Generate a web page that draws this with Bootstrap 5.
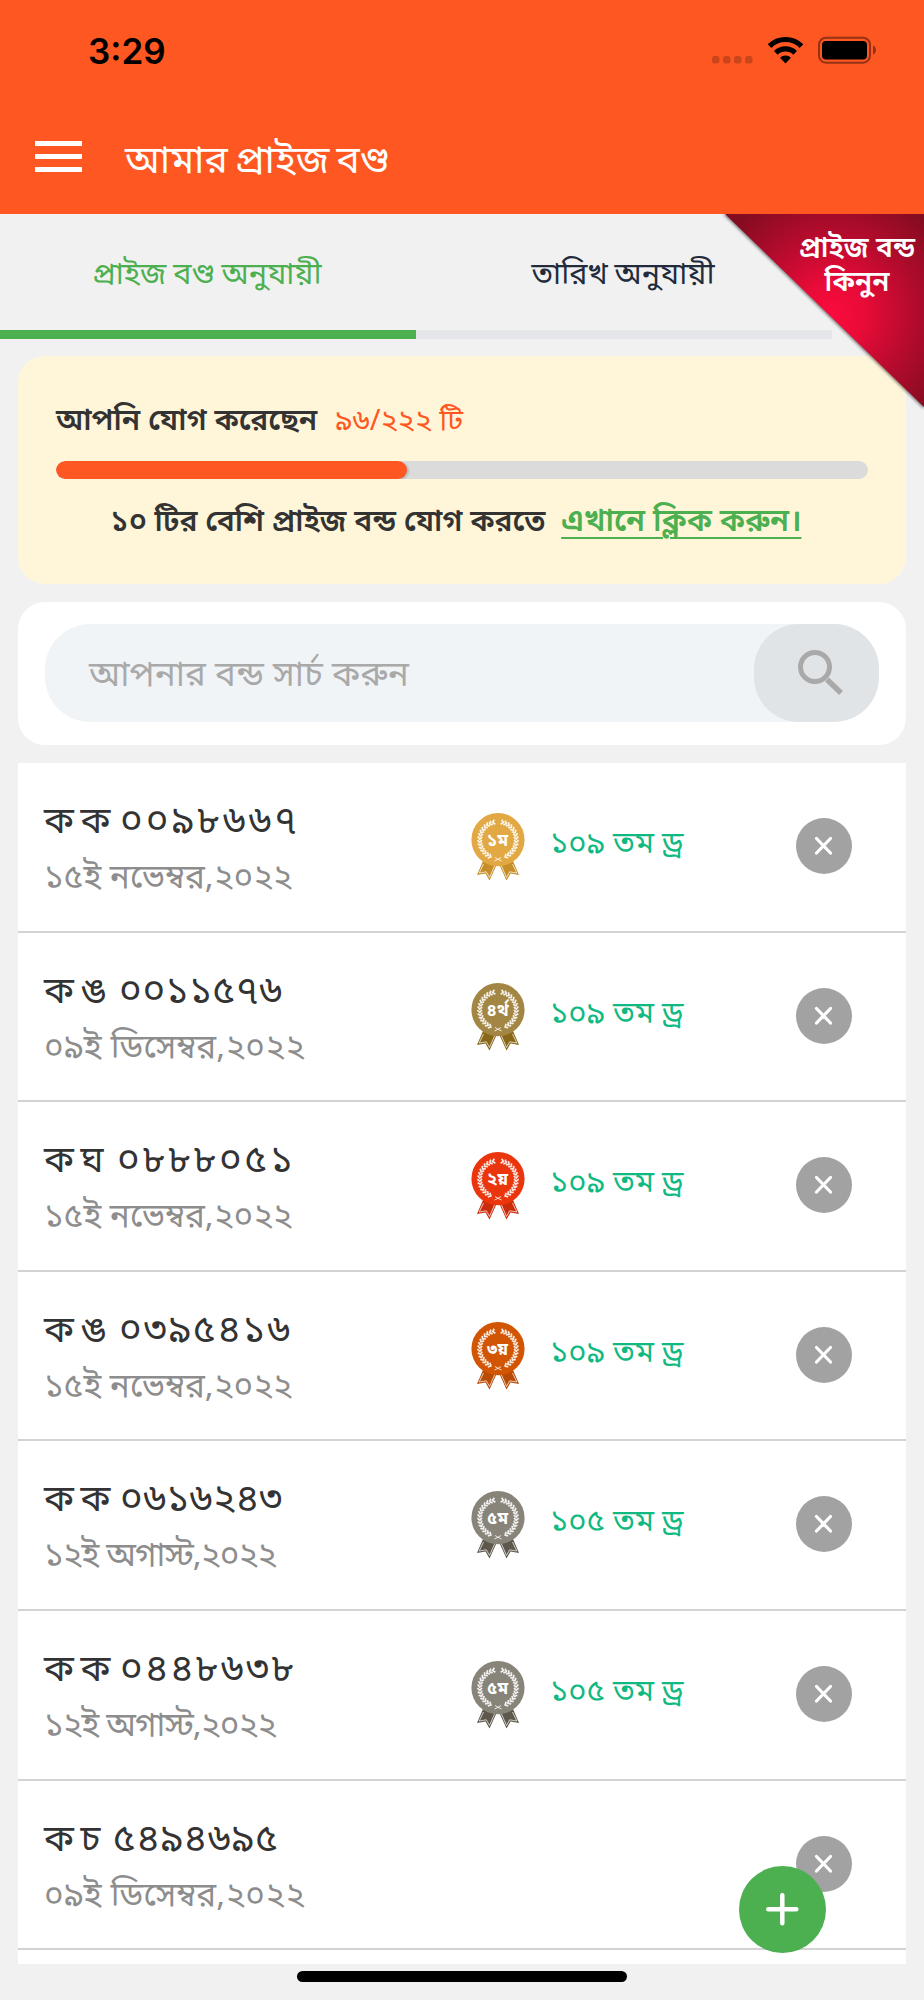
<!DOCTYPE html>
<html lang="bn">
<head>
<meta charset="utf-8">
<meta name="viewport" content="width=device-width, initial-scale=1">
<title>আমার প্রাইজ বণ্ড</title>
<link href="https://cdn.jsdelivr.net/npm/bootstrap@5.3.0/dist/css/bootstrap.min.css" rel="stylesheet">
<style>
body{background:#f1f1f1;font-family:"Noto Sans Bengali","Noto Sans",sans-serif;color:#333;width:924px;height:2000px;overflow:hidden}
.app-head{background:#ff5722;height:214px}
.status{height:100px;padding:2px 44px 0 88px}
.clock{font:600 35px/1 Inter,sans-serif;color:#000}
.title-bar{height:114px;padding-left:35px}
.app-title{font-size:39px;line-height:50px;color:#fff;margin-left:43px;padding-top:11px;word-spacing:-3px}
.tab-row{height:125px;width:832px}
.tab-item{width:416px;height:125px;padding:8px 2px 0 0;border:0;border-bottom:9px solid #e5e6ea;background:none;font-size:30.500px;line-height:50px;color:#222b3b;word-spacing:-1px}
.tab-item.on{color:#4caf50;border-color:#4caf50}
.corner{position:absolute;right:0;top:0;width:204px;height:200px}
.corner-text{position:absolute;right:8px;top:19px;width:118px;font-size:28px;line-height:34px;font-weight:600;color:#fff;white-space:nowrap}
.panel{margin:0 18px;border-radius:27px}
.quota{background:#fff6da;height:228px;margin-top:17px;padding:41px 38px 0}
.line-txt{font-size:30px;line-height:50px;height:50px;white-space:nowrap}
.bar{height:18px;border-radius:9px;background:#dbdbdb;margin-top:14px;overflow:hidden}
.bar i{display:block;height:18px;border-radius:9px;background:#ff5722;box-shadow:2px 1px 2px rgba(0,0,0,.15)}
.orange{color:#ff5722;font-size:29px;margin-left:18px}
.more{margin-top:19px;padding-right:12px}
.here{color:#4caf50;font-size:31px;text-underline-offset:6px;text-decoration-thickness:2px}
.search-card{height:143px;margin-top:18px;padding:22px 27px}
.pill{background:#f0f4f7;height:98px;border-radius:45px;padding-left:44px}
.pill span{font-size:35px;line-height:50px;color:#a9a9a9;padding-top:7px}
.go{width:125px;height:98px;border-radius:45px;background:#e0e4e6;padding-left:8px}
.bonds{margin:18px 18px 0;height:1201px;overflow:hidden}
.bond{height:169.6px;border-bottom:2px solid #d3d3d3;padding:0 54px 0 26px;background:#fff}
.bond-no{font-size:38.500px;line-height:56px;height:56px;white-space:nowrap;word-spacing:-3px}
.bond-no span:first-child{font-size:37px}
.bond-date{font-size:33.300px;line-height:56px;height:56px;color:#8d8d8d;white-space:nowrap}
.info{width:427px;padding-top:33px}
.medal{width:54px;height:68px;margin-top:50px}
.draw{font-size:31px;line-height:50px;color:#10b981;margin:58px 0 0 25px;white-space:nowrap}
.del{width:56px;height:56px;background:#a2a2a2;margin-top:55px}
.fab{position:absolute;left:739px;top:1866px;width:87px;height:87px;background:#4caf50}
.home-bar{width:330px;height:11px;border-radius:6px;background:#000;margin:7px auto 0}
</style>
</head>
<body>
<header class="app-head">
  <div class="status d-flex align-items-center justify-content-between">
    <span class="clock">3:29</span>
    <svg width="168" height="30" viewBox="0 0 168 30">
      <g fill="#000" opacity=".2"><rect x="0" y="20" width="7.500" height="7.500" rx="2.500"/><rect x="11" y="20" width="7.500" height="7.500" rx="2.500"/><rect x="22" y="20" width="7.500" height="7.500" rx="2.500"/><rect x="33" y="20" width="7.500" height="7.500" rx="2.500"/></g>
      <g fill="none" stroke="#000" stroke-width="5.200"><path d="M57.500 10.200A22.500 22.500 0 0 1 89.500 10.200"/><path d="M63.800 16.800A14 14 0 0 1 83.200 16.800"/></g>
      <path d="M73.500 27.500L68 21.800A8 8 0 0 1 79 21.800Z"/>
      <rect x="107" y="1.700" width="51" height="25" rx="7" fill="none" stroke="#000" stroke-opacity=".42" stroke-width="2"/>
      <rect x="110" y="5" width="45" height="18.500" rx="4"/><path d="M161 9.500c4 1.500 4 7.500 0 9z" opacity=".42"/>
    </svg>
  </div>
  <div class="title-bar d-flex align-items-center">
    <svg width="47" height="32" viewBox="0 0 47 32" fill="#fff"><path d="M0 0h47v5H0zM0 13h47v5H0zM0 26h47v5H0z"/></svg>
    <div class="app-title">আমার প্রাইজ বণ্ড</div>
  </div>
</header>
<div class="position-relative">
  <nav class="tab-row d-flex">
    <button class="tab-item on">প্রাইজ বণ্ড অনুযায়ী</button>
    <button class="tab-item">তারিখ অনুযায়ী</button>
  </nav>
  <div class="corner">
    <svg width="204" height="200" viewBox="0 0 204 200">
      <defs><radialGradient id="rb" gradientUnits="userSpaceOnUse" cx="112" cy="100" r="132"><stop offset="0" stop-color="#f90b3d"/><stop offset=".25" stop-color="#e80b38"/><stop offset=".6" stop-color="#b60b2d"/><stop offset="1" stop-color="#830c20"/></radialGradient>
      <filter id="sh"><feGaussianBlur stdDeviation="1.500"/></filter></defs>
      <path d="M3 0H204V195Z" fill="#000" opacity=".5" filter="url(#sh)"/><path d="M5 0H204V193Z" fill="url(#rb)"/>
    </svg>
    <div class="corner-text text-center">প্রাইজ বন্ড<br>কিনুন</div>
  </div>
</div>
<main>
  <section class="panel quota">
    <div class="line-txt"><b class="fw-semibold">আপনি যোগ করেছেন</b><span class="orange">৯৬/২২২ টি</span></div>
    <div class="bar"><i style="width:43.24%"></i></div>
    <div class="line-txt fw-semibold text-center more">১০ টির বেশি প্রাইজ বন্ড যোগ করতে<a class="here ms-3" href="#">এখানে ক্লিক করুন।</a></div>
  </section>
  <section class="panel search-card bg-white">
    <div class="pill d-flex align-items-center justify-content-between">
      <span>আপনার বন্ড সার্চ করুন</span>
      <div class="go d-flex align-items-center justify-content-center"><svg width="50" height="50" viewBox="0 0 50 50" fill="none" stroke="#a9a9a9"><circle cx="19" cy="19" r="14.500" stroke-width="5"/><path d="M31 31.500L45 45" stroke-width="5.500"/></svg></div>
    </div>
  </section>
  <section class="bonds bg-white" id="bonds"></section>
</main>
<button class="fab rounded-circle border-0 p-0 d-flex align-items-center justify-content-center"><svg width="34" height="34" viewBox="0 0 34 34" stroke="#fff" stroke-width="4.500" stroke-linecap="round"><path d="M16.300 2.200v28M2.300 16.200h28"/></svg></button>
<div class="home-bar"></div>
<script>
// series letters, series width, number, number tracking, date, date tracking, rank, draw, medal colour, ribbon colour
const rows=[
 ['ক ক',76,'০০৯৮৬৬৭',2.9,'১৫ই নভেম্বর,২০২২',0,'১ম','১০৯ তম ড্র','#e2a843','#c68e28'],
 ['ক ঙ',75,'০০১১৫৭৬',.6,'০৯ই ডিসেম্বর,২০২২',.2,'৪র্থ','১০৯ তম ড্র','#a38643','#886818'],
 ['ক ঘ',73,'০৮৮৮০৫১',2.7,'১৫ই নভেম্বর,২০২২',0,'২য়','১০৯ তম ড্র','#ea350d','#ca2b0b'],
 ['ক ঙ',75,'০৩৯৫৪১৬',1.9,'১৫ই নভেম্বর,২০২২',0,'৩য়','১০৯ তম ড্র','#d15502','#b84b04'],
 ['ক ক',76,'০৬১৬২৪৩',.4,'১২ই অগাস্ট,২০২২',-.9,'৫ম','১০৫ তম ড্র','#88847a','#5d584b'],
 ['ক ক',76,'০৪৪৮৬৩৮',2.4,'১২ই অগাস্ট,২০২২',-.9,'৫ম','১০৫ তম ড্র','#88847a','#5d584b'],
 ['ক চ',69,'৫৪৯৪৬৯৫',.9,'০৯ই ডিসেম্বর,২০২২',.2],
 ['',0,'',0,'',0]
];
// laurel wreath: paired leaves mirrored round the medal's vertical axis
let leaf='';
for(let a=14;a<164;a+=10) for(const s of [1,-1])
  leaf+=`<path transform="translate(27 27) rotate(${s*a}) scale(${s} 1)" d="M-1.300 -20.600L1 -18.300L-1.300 -16"/>`;
const tail=d=>`<path d="M12 48L6 62L14.500 60.500L18.500 67.500L26 51Z" fill="${d}"/><path d="M12.500 51L8.200 60L15.300 58.800L18.500 64.500L24 52" fill="none" stroke="#fff" stroke-opacity=".7" stroke-width="1"/>`;
const medal=(t,c,d)=>`<svg class="medal" viewBox="0 0 54 68">
 <g>${tail(d)}</g><g transform="matrix(-1 0 0 1 54 0)">${tail(d)}</g>
 <circle cx="27" cy="26.700" r="26.600" fill="${c}"/>
 <g fill="none" stroke="#fff" stroke-width="1.700" stroke-opacity=".88">${leaf}<path stroke-width=".9" d="M23.500 48Q27 46.500 30 44.500M30.500 48Q27 46.500 24 44.500"/></g>
 <text x="26.500" y="32.500" text-anchor="middle" font-size="17" font-weight="700" fill="#fff">${t}</text></svg>`;
document.getElementById('bonds').innerHTML=rows.map(r=>`<div class="bond d-flex align-items-start">
 <div class="info"><div class="bond-no d-flex"><span style="width:${r[1]}px">${r[0]}</span><span style="letter-spacing:${r[3]}px">${r[2]}</span></div><div class="bond-date" style="letter-spacing:${r[5]}px">${r[4]}</div></div>
 ${r[6]?medal(r[6],r[8],r[9])+`<div class="draw">${r[7]}</div>`:''}
 <div class="del rounded-circle ms-auto d-flex align-items-center justify-content-center"><svg width="20" height="20" viewBox="0 0 20 20" stroke="#fff" stroke-width="3.200" stroke-linecap="round"><path d="M2.500 2.500l14 14.500M16.500 2.500l-14 14.500"/></svg></div></div>`).join('');
</script>
<script src="https://cdn.jsdelivr.net/npm/bootstrap@5.3.0/dist/js/bootstrap.bundle.min.js"></script>
</body>
</html>
